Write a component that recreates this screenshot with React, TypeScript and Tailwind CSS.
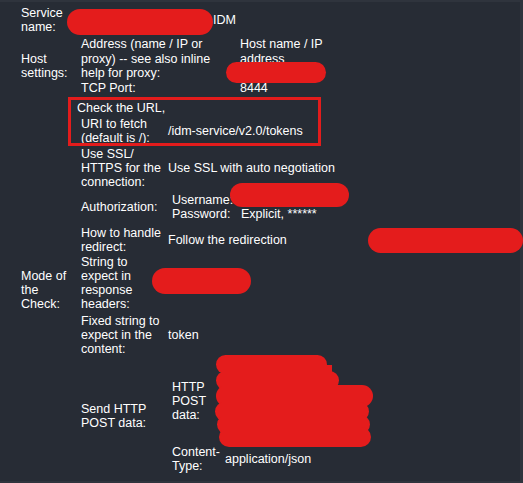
function Lines({ items }: { items: string[] }) {
  return (
    <div className="whitespace-nowrap">
      {items.map((t) => (
        <div key={t}>{t}</div>
      ))}
    </div>
  );
}

function Row({ label, children, className = "" }: { label: string[]; children?: React.ReactNode; className?: string }) {
  return (
    <div className={`flex items-center ${className}`}>
      <div className="w-[91px] pl-[4px]">
        <Lines items={label} />
      </div>
      <div className="whitespace-nowrap">{children}</div>
    </div>
  );
}

export default function App() {
  return (
    <div className="relative w-[523px] h-[483px] bg-[#2f343d] overflow-hidden font-['Liberation_Sans',Arial,sans-serif] text-[12.5px] leading-[14px] text-white">
      <div className="mt-[2px] w-[520px] h-[479px] bg-[#272c35] pt-[4px]">
        {/* Service name */}
        <div className="flex items-center">
          <div className="w-[81px] pl-[21px]">
            <Lines items={["Service", "name:"]} />
          </div>
          <div className="pl-[132px]">IDM</div>
        </div>

        {/* Host settings */}
        <div className="flex items-center mt-[3px] leading-[14.5px]">
          <div className="w-[77px] pl-[21px]">
            <Lines items={["Host", "settings:"]} />
          </div>
          <div>
            <div className="flex items-start">
              <div className="w-[163px] pl-[4px]">
                <Lines items={["Address (name / IP or", "proxy) -- see also inline", "help for proxy:"]} />
              </div>
              <Lines items={["Host name / IP", "address"]} />
            </div>
            <div className="flex">
              <div className="w-[163px] pl-[4px]">TCP Port:</div>
              <div>8444</div>
            </div>
          </div>
        </div>

        {/* Mode of the Check */}
        <div className="flex items-center mt-[6px]">
          <div className="w-[77px] pl-[21px] pt-[5px]">
            <Lines items={["Mode of", "the", "Check:"]} />
          </div>
          <div>
            <div className="whitespace-nowrap">Check the URL,</div>
            <Row className="mt-[2px]" label={["URI to fetch", "(default is /):"]}>
              /idm-service/v2.0/tokens
            </Row>
            <Row className="mt-[2px]" label={["Use SSL/", "HTTPS for the", "connection:"]}>
              Use SSL with auto negotiation
            </Row>
            <Row className="mt-[4px]" label={["Authorization:"]}>
              <div className="pl-[4px]">
                <div className="flex">
                  <div className="w-[69px]">Username:</div>
                  <div></div>
                </div>
                <div className="flex">
                  <div className="w-[69px]">Password:</div>
                  <div>Explicit, ******</div>
                </div>
              </div>
            </Row>
            <Row className="mt-[5px]" label={["How to handle", "redirect:"]}>
              Follow the redirection
            </Row>
            <Row className="mt-[1px]" label={["String to", "expect in", "response", "headers:"]} />
            <Row className="mt-[3px]" label={["Fixed string to", "expect in the", "content:"]}>
              token
            </Row>
            <Row className="mt-[3px]" label={["Send HTTP", "POST data:"]}>
              <div className="pl-[4px]">
                <div className="flex items-center">
                  <div className="w-[53px]">
                    <Lines items={["HTTP", "POST", "data:"]} />
                  </div>
                  <div className="h-[84px]"></div>
                </div>
                <div className="flex items-center mt-[2px]">
                  <div className="w-[53px]">
                    <Lines items={["Content-", "Type:"]} />
                  </div>
                  <div>application/json</div>
                </div>
              </div>
            </Row>
          </div>
        </div>
      </div>

      {/* annotation box */}
      <div className="absolute left-[68px] top-[97px] w-[253px] h-[49px] border-[3px] border-[#e31c1c]"></div>

      {/* redactions */}
      <div className="absolute left-[67px] top-[9px] w-[146px] h-[26px] rounded-full bg-[#e41c1c]"></div>
      <div className="absolute left-[226px] top-[62px] w-[100px] h-[21px] rounded-full bg-[#e41c1c]"></div>
      <div className="absolute left-[230px] top-[183px] w-[119px] h-[24px] rounded-full bg-[#e41c1c]"></div>
      <div className="absolute left-[368px] top-[228px] w-[155px] h-[25px] rounded-full bg-[#e41c1c]"></div>
      <div className="absolute left-[152px] top-[268px] w-[99px] h-[26px] rounded-full bg-[#e41c1c]"></div>
      <div className="absolute left-[216px] top-[355px] w-[111px] h-[19px] rounded-full bg-[#e41c1c]"></div>
      <div className="absolute left-[216px] top-[371px] w-[123px] h-[19px] rounded-full bg-[#e41c1c]"></div>
      <div className="absolute left-[216px] top-[385px] w-[157px] h-[22px] rounded-full bg-[#e41c1c]"></div>
      <div className="absolute left-[215px] top-[402px] w-[154px] h-[19px] rounded-full bg-[#e41c1c]"></div>
      <div className="absolute left-[217px] top-[415px] w-[153px] h-[19px] rounded-full bg-[#e41c1c]"></div>
      <div className="absolute left-[219px] top-[427px] w-[152px] h-[20px] rounded-full bg-[#e41c1c]"></div>
      <div className="absolute left-[222px] top-[365px] w-[110px] h-[72px] bg-[#e41c1c]"></div>
    </div>
  );
}
